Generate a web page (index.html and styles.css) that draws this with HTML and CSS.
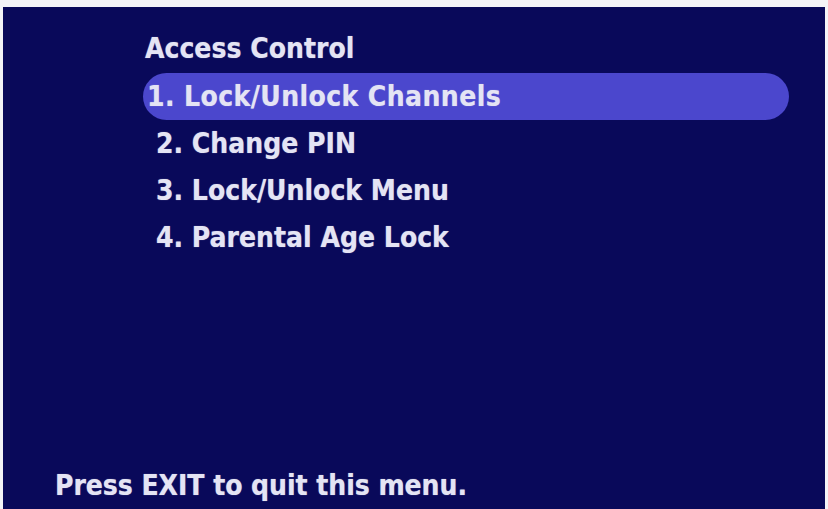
FILE: index.html
```html
<!DOCTYPE html>
<html>
<head>
<meta charset="utf-8">
<link rel="stylesheet" href="styles.css">
</head>
<body>
<div class="screen">
  <div class="menu">
    <div class="title">Access Control</div>
    <div class="item selected">1. Lock/Unlock Channels</div>
    <div class="item">2. Change PIN</div>
    <div class="item">3. Lock/Unlock Menu</div>
    <div class="item">4. Parental Age Lock</div>
  </div>
  <div class="footer">Press EXIT to quit this menu.</div>
</div>
</body>
</html>
```
FILE: styles.css
```css
html, body {
  margin: 0;
  padding: 0;
  background: #f4f4f8;
  overflow: hidden;
}
.screen {
  margin: 7px 3px 0 3px;
  height: 502px;
  background: #09095a;
  display: flex;
  flex-direction: column;
  justify-content: space-between;
  font-family: "DejaVu Sans Condensed", "DejaVu Sans", sans-serif;
  font-weight: bold;
  font-size: 28px;
  color: #e4e4f4;
  text-shadow: 0 0 1px rgba(228, 228, 244, 0.6);
  box-sizing: border-box;
  padding: 24px 36px 5px 52px;
}
.menu {
  display: flex;
  flex-direction: column;
  padding-left: 88px;
}
.title {
  height: 36px;
  line-height: 36px;
  margin-bottom: 6px;
  padding-left: 2px;
}
.item {
  height: 47px;
  line-height: 47px;
  padding-left: 13px;
}
.selected {
  background: #4b47cd;
  border-radius: 24px;
  padding-left: 4px;
  letter-spacing: 0.4px;
}
.footer {
  line-height: 36px;
  letter-spacing: -0.05px;
}
```
